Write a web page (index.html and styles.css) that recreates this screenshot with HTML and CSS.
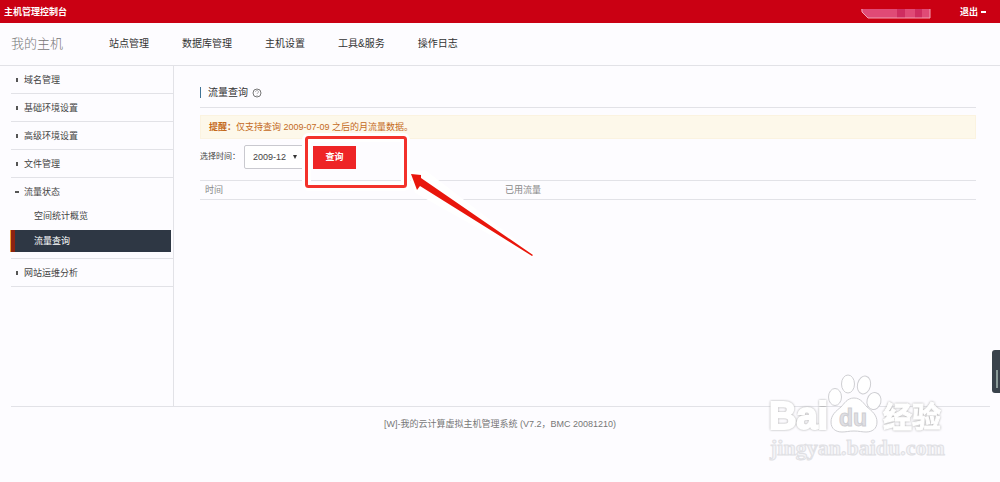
FILE: index.html
```html
<!DOCTYPE html>
<html lang="zh-CN">
<head>
  <meta charset="UTF-8">
  <title>主机管理控制台</title>
  <link rel="stylesheet" href="styles.css">
</head>
<body>
  <header class="topbar">
    <strong class="brand">主机管理控制台</strong>
    <div class="account">
      <svg class="masked-name" width="70" height="12" viewBox="0 0 70 12" aria-hidden="true">
        <path d="M0 1h69v9H7L1 4z" fill="#e04a76"/>
        <path d="M36 1h8v9h-8zM54 1h7v9h-7z" fill="#cf2d60"/>
        <path d="M1 1v3l6 6h62V1" fill="none" stroke="#f3a0b2"/>
      </svg>
      <button class="logout" type="button">退出<span class="dash"></span></button>
    </div>
  </header>

  <nav class="mainnav">
    <a class="home" href="#">我的主机</a>
    <a href="#">站点管理</a>
    <a href="#">数据库管理</a>
    <a href="#">主机设置</a>
    <a href="#">工具&amp;服务</a>
    <a href="#">操作日志</a>
  </nav>

  <div class="layout">
    <aside class="sidebar">
      <ul class="menu">
        <li><a href="#">域名管理</a></li>
        <li><a href="#">基础环境设置</a></li>
        <li><a href="#">高级环境设置</a></li>
        <li><a href="#">文件管理</a></li>
        <li class="open">
          <a href="#">流量状态</a>
          <ul class="submenu">
            <li><a href="#">空间统计概览</a></li>
            <li><a class="active" href="#">流量查询</a></li>
          </ul>
        </li>
        <li><a href="#">网站运维分析</a></li>
      </ul>
    </aside>

    <main class="content">
      <h1 class="title">
        <span class="title-text">流量查询</span>
        <svg width="10" height="10" viewBox="0 0 10 10" aria-hidden="true">
          <circle cx="5" cy="5" r="4" fill="none" stroke="#777"/>
          <path d="M3.5 4c0-2 3-2 3 0 0 1-1.5 1-1.5 2M5 7v1" fill="none" stroke="#aaa"/>
        </svg>
      </h1>
      <p class="notice"><b>提醒：</b>仅支持查询 2009-07-09 之后的月流量数据。</p>

      <form class="query">
        <label for="month">选择时间：</label>
        <div class="select-wrap">
          <select id="month">
            <option>2009-12</option>
          </select>
        </div>
        <div class="action">
          <button class="submit" type="button">查询</button>
          <svg class="callout" width="240" height="128" viewBox="0 0 240 128" aria-hidden="true">
            <rect x="5.5" y="5.5" width="99" height="49" rx="2" fill="none" stroke="#fff" stroke-width="9"/>
            <path d="M110 42l14-1L232 124 116 59z" fill="#fff" stroke="#fff" stroke-width="5"/>
            <rect x="5.5" y="5.5" width="99" height="49" rx="2" fill="none" stroke="#f3322b" stroke-width="3"/>
            <path d="M110 42l10 1v3l112 77-1 1L119 54l-3 4z" fill="#e9160c"/>
          </svg>
        </div>
      </form>

      <table class="result">
        <thead>
          <tr><th>时间</th><th>已用流量</th></tr>
        </thead>
      </table>
    </main>
  </div>

  <footer class="footer">[W]-我的云计算虚拟主机管理系统 (V7.2，BMC 20081210)</footer>

  <button class="side-tab" type="button" aria-label="展开"></button>

  <svg class="watermark" width="190" height="94" viewBox="0 0 190 94" role="img" aria-label="Baidu 经验">
    <g fill="#fff" stroke="#cfcfd3">
      <ellipse cx="70" cy="26" rx="6.5" ry="8.5"/>
      <ellipse cx="83" cy="13" rx="6.5" ry="9"/>
      <ellipse cx="99" cy="14" rx="6.5" ry="9" transform="rotate(14 99 14)"/>
      <ellipse cx="109" cy="30" rx="7" ry="8.5" transform="rotate(14 109 30)"/>
      <path d="M89 27c-7 0-10 6-13 9-5 4-10 8-10 15 0 7 5 10 11 10 4 0 7-1 12-1s8 1 12 1c6 0 11-3 11-10 0-7-5-11-10-15-3-3-6-9-13-9z"/>
    </g>
    <text class="wm-latin" x="4" y="58">Bai</text>
    <text class="wm-du" x="74" y="55">du</text>
    <text class="wm-cjk" x="118" y="57">经验</text>
    <text class="wm-url" x="5" y="84">jingyan.baidu.com</text>
  </svg>
</body>
</html>
```
FILE: styles.css
```css
:root {
  --red: #ca0013;
  --line: #e2e2e7;
  --text: #444;
  --bg: #fdfcff;
}

* {
  box-sizing: border-box;
}

body {
  position: relative;
  display: flex;
  flex-direction: column;
  min-height: 100vh;
  margin: 0;
  background: var(--bg);
  color: var(--text);
  font-family: "Liberation Sans", "Noto Sans CJK SC", sans-serif;
  font-size: 9px;
  line-height: 14px;
}

a {
  color: inherit;
  text-decoration: none;
}

button,
select {
  font: inherit;
}

ul {
  margin: 0;
  padding: 0;
  list-style: none;
}

/* Top bar */
.topbar {
  display: flex;
  align-items: center;
  justify-content: space-between;
  height: 23px;
  padding: 0 14px 0 4px;
  background: var(--red);
  color: #fff;
}

.account {
  display: flex;
  align-items: center;
  gap: 29px;
}

.masked-name {
  margin-top: 5px;
}

.logout {
  display: flex;
  align-items: center;
  gap: 3px;
  padding: 0;
  border: 0;
  background: none;
  color: #fff;
  font-weight: bold;
}

.dash {
  width: 5px;
  height: 2px;
  background: #fff;
}

/* Main navigation */
.mainnav {
  display: flex;
  align-items: center;
  gap: 33px;
  height: 43px;
  padding: 0 11px;
  border-bottom: 1px solid var(--line);
  color: #333;
  font-size: 10px;
}

.home {
  margin-right: 13px;
  color: #777;
  font-size: 13px;
  font-weight: 300;
}

/* Page body */
.layout {
  display: flex;
  flex: 1;
  margin: 0 10px 0 11px;
  border-bottom: 1px solid var(--line);
}

.sidebar {
  flex: 0 0 163px;
  border-right: 1px solid var(--line);
}

.menu > li {
  border-bottom: 1px solid var(--line);
}

.menu > li > a {
  display: flex;
  align-items: center;
  gap: 6px;
  height: 27px;
  padding-left: 5px;
}

.menu > li > a::before {
  content: "";
  width: 2px;
  height: 4px;
  background: #555;
}

.menu > .open > a::before {
  width: 4px;
  height: 2px;
  margin: 0 -1px;
}

.submenu {
  padding: 0 2px 6px 0;
}

.submenu a {
  display: block;
  height: 22px;
  margin-top: 3px;
  padding: 4px 0 4px 23px;
}

.submenu li:first-child a {
  margin-top: 0;
}

.submenu .active {
  padding-left: 20px;
  border-left: 3px solid #8d2312;
  background: #2e3744;
  box-shadow: inset 1px 0 #8d2312, -1px 0 #f0a030;
  color: #fff;
}

.content {
  flex: 1;
  min-width: 0;
  padding: 12px 14px 12px 26px;
}

.title {
  display: flex;
  align-items: center;
  gap: 4px;
  height: 30px;
  margin: 0 0 7px;
  border-bottom: 1px solid var(--line);
  color: #333;
  font-size: 10px;
  font-weight: normal;
}

.title-text {
  padding-left: 7px;
  border-left: 1px solid #3f7396;
  line-height: 11px;
}

.notice {
  margin: 0 0 6px;
  padding: 4px 8px;
  border: 1px solid #fbf3e0;
  background: #fdf8ea;
  color: #c46a1c;
}

.query {
  display: flex;
  align-items: center;
  height: 24px;
  margin-bottom: 11px;
}

.query label {
  flex: 0 0 44px;
  font-size: 8px;
  white-space: nowrap;
}

.select-wrap {
  position: relative;
  width: 60px;
  margin-right: 9px;
}

.select-wrap::after {
  content: "";
  position: absolute;
  top: 10px;
  right: 7px;
  border: 2px solid transparent;
  border-top: 4px solid #333;
  border-bottom: 0;
}

.select-wrap select {
  display: block;
  width: 100%;
  height: 24px;
  padding: 0 8px;
  border: 1px solid #c9c9cf;
  border-radius: 2px;
  appearance: none;
  background: #fff;
  color: var(--text);
}

.action {
  position: relative;
}

.submit {
  display: block;
  width: 43px;
  height: 23px;
  padding: 0;
  border: 0;
  background: #ee2426;
  color: #fff;
  font-weight: bold;
}

/* Hint frame and arrow over the form */
.callout {
  position: absolute;
  top: -14px;
  left: -12px;
  overflow: visible;
  pointer-events: none;
}

.result {
  width: 100%;
  border-collapse: collapse;
  table-layout: fixed;
}

.result th {
  padding: 2px 5px;
  border-top: 1px solid var(--line);
  border-bottom: 1px solid var(--line);
  color: #888;
  font-weight: normal;
  text-align: left;
}

.result th:first-child {
  width: 300px;
}

.footer {
  height: 75px;
  padding-top: 10px;
  color: #777;
  text-align: center;
}

.side-tab {
  position: absolute;
  right: 0;
  bottom: 89px;
  width: 8px;
  height: 43px;
  padding: 0;
  border: 0;
  border-radius: 3px 0 0 3px;
  background: linear-gradient(#8a9a98, #8a9a98) 4px 20px / 2px 18px no-repeat, #39424b;
}

/* Watermark */
.watermark {
  position: absolute;
  right: 45px;
  bottom: 17px;
  pointer-events: none;
}

.wm-latin,
.wm-cjk {
  fill: #fff;
  stroke: #fff;
  stroke-width: 2px;
  filter: drop-shadow(0 0 1px #aaa);
}

.wm-latin {
  font: bold 38px "Liberation Sans", sans-serif;
}

.wm-du {
  fill: #e0e0e4;
  stroke: #cfcfd3;
  font: bold 23px "Liberation Sans", sans-serif;
}

.wm-cjk {
  stroke-width: 1px;
  font: bold 29px "Noto Sans CJK SC", sans-serif;
}

.wm-url {
  fill: #f4f4f7;
  stroke: #e0e0e4;
  font: bold 22px "Liberation Serif", serif;
}
```
